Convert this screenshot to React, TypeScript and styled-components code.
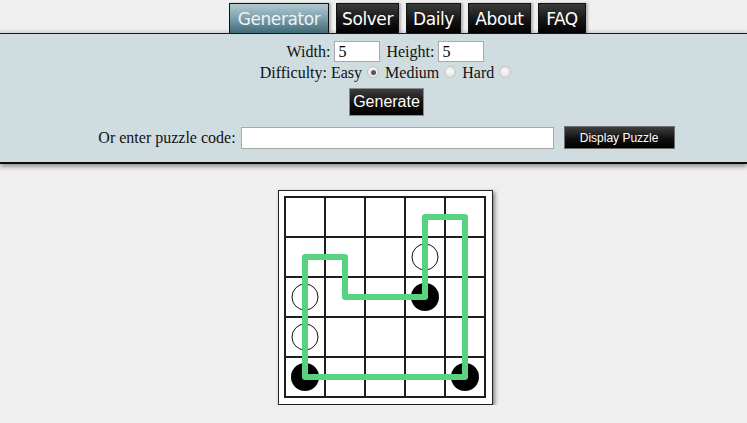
import React, { useState } from "react";
import styled, { createGlobalStyle } from "styled-components";

const GlobalStyle = createGlobalStyle`
  html, body {
    margin: 0;
    padding: 0;
    background: #efefef;
  }
  body {
    font-family: "Liberation Serif", "Times New Roman", serif;
    font-size: 16px;
    color: #111;
  }
`;

const tabs = [
  { label: "Generator", width: 100 },
  { label: "Solver", width: 63 },
  { label: "Daily", width: 55 },
  { label: "About", width: 63 },
  { label: "FAQ", width: 48 },
];

// cell centres in svg coords: 21 + 40 * index
const c = (i: number) => 21 + 40 * i;

const whiteStones: [number, number][] = [
  [3, 1],
  [0, 2],
  [0, 3],
];
const blackStones: [number, number][] = [
  [3, 2],
  [0, 4],
  [4, 4],
];
const loop: [number, number][] = [
  [0, 4],
  [4, 4],
  [4, 0],
  [3, 0],
  [3, 2],
  [1, 2],
  [1, 1],
  [0, 1],
];

const App = () => {
  const [difficulty, setDifficulty] = useState("Easy");
  const [width, setWidth] = useState("5");
  const [height, setHeight] = useState("5");
  const [code, setCode] = useState("");

  const pathD =
    loop.map(([x, y], i) => `${i === 0 ? "M" : "L"}${c(x)} ${c(y)}`).join(" ") + " Z";

  return (
    <>
      <GlobalStyle />
      <TabBar>
        {tabs.map((tab) => (
          <Tab key={tab.label} $active={tab.label === "Generator"} $width={tab.width}>
            {tab.label}
          </Tab>
        ))}
      </TabBar>
      <Panel>
        <Row>
          <Label>Width:</Label>
          <SmallInput value={width} onChange={(e) => setWidth(e.target.value)} />
          <Label>Height:</Label>
          <SmallInput value={height} onChange={(e) => setHeight(e.target.value)} />
        </Row>
        <Row>
          <Label>Difficulty:</Label>
          {["Easy", "Medium", "Hard"].map((d) => (
            <RadioLabel key={d}>
              {d}
              <Radio
                type="radio"
                name="difficulty"
                checked={difficulty === d}
                onChange={() => setDifficulty(d)}
              />
            </RadioLabel>
          ))}
        </Row>
        <GenerateButton>Generate</GenerateButton>
        <CodeRow>
          <Label>Or enter puzzle code:</Label>
          <CodeInput value={code} onChange={(e) => setCode(e.target.value)} />
          <DisplayButton>Display Puzzle</DisplayButton>
        </CodeRow>
      </Panel>
      <BoardArea>
        <Board>
          <svg width="203" height="203" viewBox="0 0 203 203">
            {[0, 1, 2, 3, 4, 5].map((i) => (
              <g key={i}>
                <line x1={1 + 40 * i} y1={0} x2={1 + 40 * i} y2={202} stroke="#1e1e1e" strokeWidth="2" />
                <line x1={0} y1={1 + 40 * i} x2={202} y2={1 + 40 * i} stroke="#1e1e1e" strokeWidth="2" />
              </g>
            ))}
            {whiteStones.map(([x, y]) => (
              <circle key={`w${x}${y}`} cx={c(x)} cy={c(y)} r="13" fill="#fff" stroke="#111" strokeWidth="1" />
            ))}
            {blackStones.map(([x, y]) => (
              <circle key={`b${x}${y}`} cx={c(x)} cy={c(y)} r="14" fill="#000" />
            ))}
            <path d={pathD} fill="none" stroke="#58d180" strokeWidth="6" strokeLinejoin="round" />
          </svg>
        </Board>
      </BoardArea>
    </>
  );
};

export default App;

const TabBar = styled.div`
  display: flex;
  gap: 7px;
  padding: 3px 0 0 229px;
  height: 33px;
  box-sizing: border-box;
  position: relative;
  z-index: 2;
`;

const Tab = styled.div<{ $active?: boolean; $width: number }>`
  display: flex;
  align-items: center;
  justify-content: center;
  width: ${(p) => p.$width}px;
  height: 30px;
  box-sizing: border-box;
  border: 1px solid #111;
  border-bottom: none;
  font-family: "DejaVu Sans", Verdana, sans-serif;
  font-size: 17px;
  letter-spacing: -0.4px;
  color: ${(p) => (p.$active ? "#eef4f6" : "#fff")};
  background: ${(p) =>
    p.$active
      ? "linear-gradient(to bottom, #b2c9d0 0%, #7c9fab 50%, #3f6977 100%)"
      : "linear-gradient(to bottom, #3c3c3c 0%, #151515 55%, #000 100%)"};
  box-shadow: 2px 0 2px rgba(0, 0, 0, 0.25);
  cursor: pointer;
`;

const Panel = styled.div`
  background: #cfdde1;
  border-top: 1px solid #1a1a1a;
  border-bottom: 2px solid #0c0c0c;
  box-shadow: 0 3px 4px rgba(0, 0, 0, 0.35), 0 -2px 3px rgba(0, 0, 0, 0.12);
  padding: 7px 0 13px 26px;
  display: flex;
  flex-direction: column;
  align-items: center;
`;

const Row = styled.div`
  display: flex;
  align-items: center;
  gap: 4px;
  height: 21px;
`;

const Label = styled.span`
  font-size: 16px;
  line-height: 20px;
`;

const SmallInput = styled.input`
  width: 46px;
  height: 21px;
  box-sizing: border-box;
  border: 1px solid #a9a9a9;
  padding: 0 3px;
  font-family: "Liberation Serif", "Times New Roman", serif;
  font-size: 16px;
  background: #fff;
  margin-right: 2px;
  outline: none;
`;

const RadioLabel = styled.label`
  display: flex;
  align-items: center;
  gap: 5px;
  margin-right: 2px;
`;

const Radio = styled.input`
  appearance: none;
  margin: 0 0 1px 0;
  width: 12px;
  height: 12px;
  border-radius: 50%;
  border: 1px solid #c4c4c4;
  background: radial-gradient(circle at 50% 40%, #fbfbfb, #dcdcdc);
  display: grid;
  place-items: center;

  &:checked::after {
    content: "";
    width: 5px;
    height: 5px;
    border-radius: 50%;
    background: #555;
  }
`;

const blackGradient = "linear-gradient(to bottom, #3e3e3e 0%, #111 55%, #000 100%)";

const GenerateButton = styled.button`
  margin-top: 5px;
  height: 28px;
  width: 75px;
  padding: 0;
  border: 1px solid #8a8a8a;
  background: ${blackGradient};
  color: #fff;
  font-family: "Liberation Sans", Arial, sans-serif;
  font-size: 16px;
  cursor: pointer;
`;

const CodeRow = styled.div`
  display: flex;
  align-items: center;
  margin-top: 10px;
`;

const CodeInput = styled.input`
  width: 313px;
  height: 22px;
  box-sizing: border-box;
  margin: 0 10px 0 5px;
  border: 1px solid #a9a9a9;
  background: #fff;
  outline: none;
`;

const DisplayButton = styled.button`
  width: 111px;
  height: 23px;
  padding: 0;
  border: 1px solid #6f6f6f;
  background: ${blackGradient};
  color: #fff;
  font-family: "Liberation Sans", Arial, sans-serif;
  font-size: 12px;
  cursor: pointer;
`;

const BoardArea = styled.div`
  display: flex;
  justify-content: center;
  padding: 26px 0 0 24px;
`;

const Board = styled.div`
  background: #fff;
  border: 1px solid #222;
  padding: 5px;
  display: flex;
  box-shadow: 2px 2px 4px rgba(0, 0, 0, 0.45);

  svg {
    display: block;
  }
`;
